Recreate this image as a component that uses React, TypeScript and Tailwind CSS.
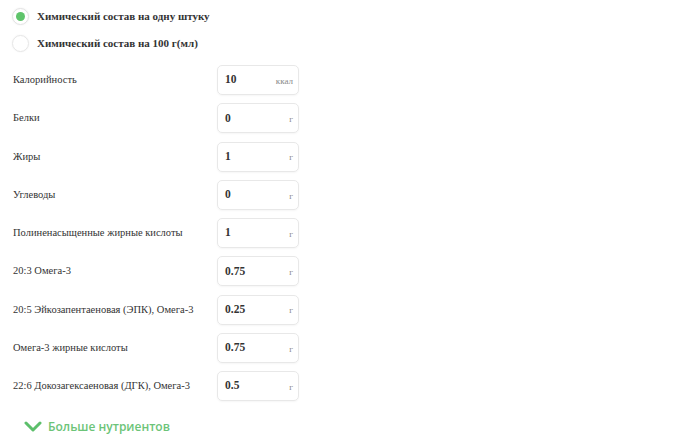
import React from "react";

const rows: [string, string, string][] = [
  ["Калорийность", "10", "ккал"],
  ["Белки", "0", "г"],
  ["Жиры", "1", "г"],
  ["Углеводы", "0", "г"],
  ["Полиненасыщенные жирные кислоты", "1", "г"],
  ["20:3 Омега-3", "0.75", "г"],
  ["20:5 Эйкозапентаеновая (ЭПК), Омега-3", "0.25", "г"],
  ["Омега-3 жирные кислоты", "0.75", "г"],
  ["22:6 Докозагексаеновая (ДГК), Омега-3", "0.5", "г"],
];

export default function App() {
  return (
    <div className="w-[680px] h-[434px] bg-white overflow-hidden text-[#333] font-['Liberation_Serif','Times_New_Roman',serif]">
      <div className="pl-[12px] pt-[7px] flex flex-col gap-[9px]">
        <div className="flex items-center gap-[8px] h-[18px]">
          <div className="w-[17px] h-[17px] rounded-full border border-[#e2e2e2] flex items-center justify-center shadow-[0_0_2px_rgba(0,0,0,0.08)]">
            <div className="w-[9px] h-[9px] rounded-full bg-[#5fc46b]" />
          </div>
          <span className="text-[11px] font-bold text-[#333]">Химический состав на одну штуку</span>
        </div>
        <div className="flex items-center gap-[8px] h-[18px]">
          <div className="w-[17px] h-[17px] rounded-full border border-[#e6e6e6] shadow-[0_0_2px_rgba(0,0,0,0.06)]" />
          <span className="text-[11px] font-bold text-[#333]">Химический состав на 100 г(мл)</span>
        </div>
      </div>
      <div className="mt-[13px] pl-[13px] flex flex-col gap-[8.25px]">
        {rows.map(([label, val, unit]) => (
          <div key={label} className="flex items-center">
            <span className="w-[204px] text-[10.5px] text-[#333] whitespace-nowrap">{label}</span>
            <div className="w-[82px] h-[30px] rounded-[5px] border border-[#e8e8e8] flex items-center justify-between pl-[7px] pr-[5px] shadow-[0_1px_2px_rgba(0,0,0,0.04)]">
              <span className="text-[11.5px] font-bold text-[#333]">{val}</span>
              <span className="text-[9px] text-[#888] mt-[3px]">{unit}</span>
            </div>
          </div>
        ))}
      </div>
      <div className="mt-[17px] pl-[24px] flex items-center gap-[6px]">
        <svg width="18" height="12" viewBox="0 0 18 12">
          <path d="M2 2 L9 9 L16 2" fill="none" stroke="#5cbf6b" strokeWidth="3" strokeLinecap="round" strokeLinejoin="round" />
        </svg>
        <span className="text-[12px] font-semibold text-[#6cc478] font-['Open_Sans',sans-serif]">Больше нутриентов</span>
      </div>
    </div>
  );
}
